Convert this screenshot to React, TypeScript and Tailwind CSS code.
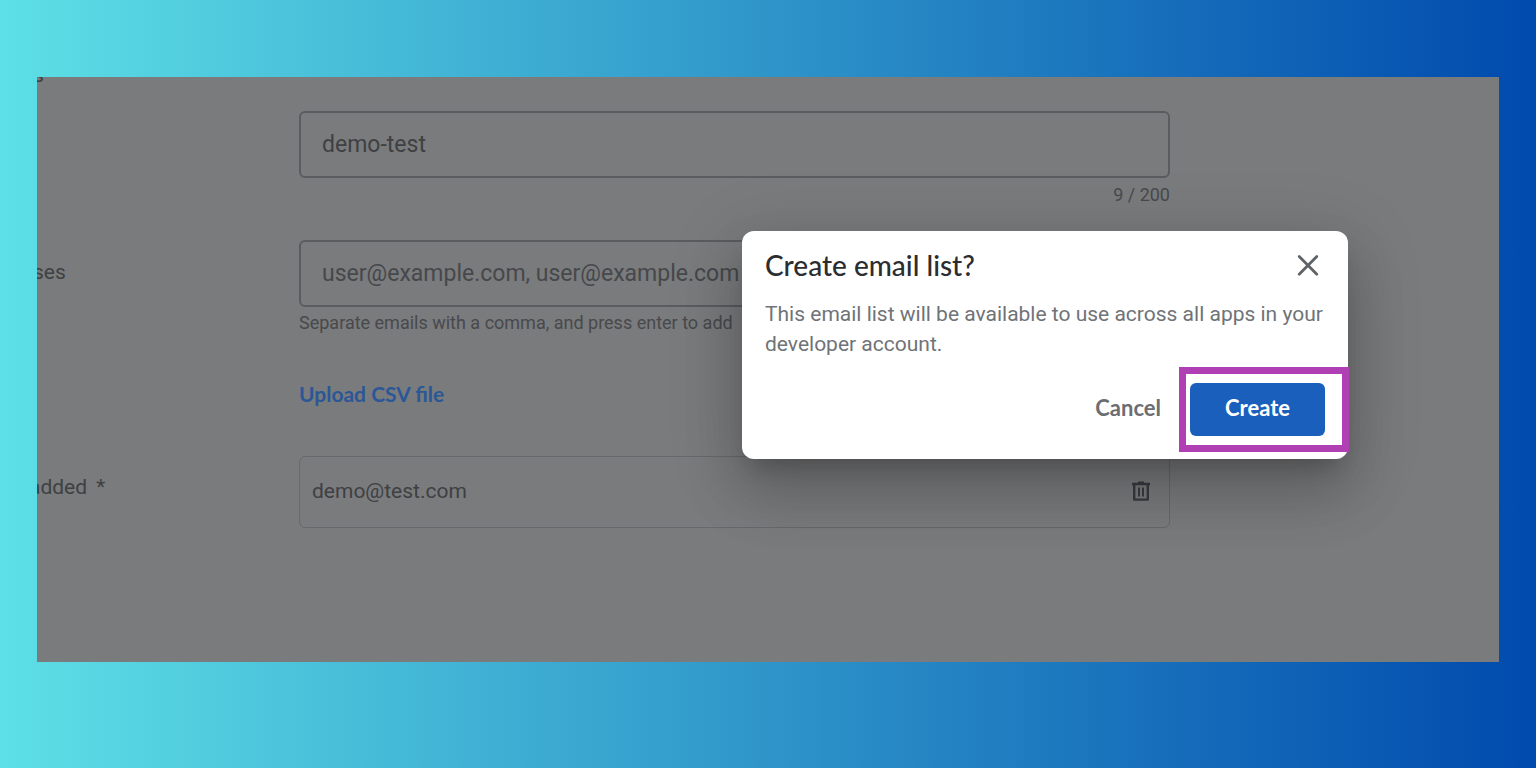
import React, { useState } from 'react';

const CloseIcon: React.FC = () => (
  <svg viewBox="0 0 24 24" className="h-6 w-6" fill="none" stroke="currentColor" strokeWidth="2.8" strokeLinecap="round">
    <path d="M3.2 3.6 20.8 21.2M20.8 3.6 3.2 21.2" />
  </svg>
);

const TrashIcon: React.FC = () => (
  <svg viewBox="0 0 24 24" className="h-6 w-6" fill="none" stroke="currentColor" strokeWidth="2.4">
    <path d="M3 4h18M9 2.6h6" />
    <path d="M5.2 4v15.6h13.6V4" strokeLinejoin="round" />
    <path d="M10 7.5v9M14 7.5v9" strokeWidth="2" />
  </svg>
);

const fieldClass =
  'block h-[67px] w-full rounded-md border-2 border-[#5b5c5f] bg-transparent px-[21px] text-[23px] text-[#3f4043] outline-none placeholder:text-[#46484b]';

const App: React.FC = () => {
  const [name, setName] = useState('demo-test');
  const [emails, setEmails] = useState('');

  return (
    <div className="min-h-screen bg-linear-to-r/srgb from-[#5de0e6] to-[#004aad] px-[37px] py-[77px] font-['Roboto',sans-serif]">
      <main className="relative overflow-hidden bg-[#7a7b7d] pt-[34px] pb-[134px]">
        <div className="grid grid-cols-[262px_1fr] pr-[329px] text-[#3f4043]">
          <label htmlFor="name" className="-ml-1 -mt-12 h-6 text-[21px] leading-6">s</label>
          <div>
            <input id="name" className={fieldClass} value={name} onChange={e => setName(e.target.value)} />
            <p className="mt-[5px] text-right text-lg leading-6 text-[#48494c]">{name.length} / 200</p>
          </div>

          <label htmlFor="emails" className="-ml-1 mt-[53px] text-[21px] leading-6">ses</label>
          <div className="mt-[33px]">
            <input
              id="emails"
              className={fieldClass}
              value={emails}
              placeholder="user@example.com, user@example.com"
              onChange={e => setEmails(e.target.value)}
            />
            <p className="mt-1 text-lg leading-6 text-[#48494c]">Separate emails with a comma, and press enter to add</p>
            <button className="mt-[47px] block font-['Lato',sans-serif] text-[21px] leading-6 font-bold text-[#2b5797]">
              Upload CSV file
            </button>
          </div>

          <div className="-ml-2 mt-[69px] text-[21px] leading-6">
            added <span className="ml-1">*</span>
          </div>
          <div className="mt-[50px] flex h-[72px] items-center justify-between rounded-md border border-[#68696c] pr-4 pl-3 text-[21px]">
            <span>demo@test.com</span>
            <button aria-label="Remove" className="text-[#3a3b40]">
              <TrashIcon />
            </button>
          </div>
        </div>

        <section
          role="dialog"
          aria-labelledby="dialog-title"
          className="absolute top-[154px] right-[151px] w-[606px] rounded-xl bg-white pt-[18px] pb-[7px] pl-[23px] shadow-[0_16px_22px_-10px_rgba(0,0,0,0.2),0_36px_57px_4px_rgba(0,0,0,0.14),0_14px_69px_12px_rgba(0,0,0,0.12)]"
        >
          <div className="flex items-center justify-between pr-7">
            <h2 id="dialog-title" className="font-['Lato',sans-serif] text-[28px] leading-8 font-medium text-[#2c2d30]">
              Create email list?
            </h2>
            <button aria-label="Close" className="text-[#5f6368]">
              <CloseIcon />
            </button>
          </div>
          <p className="mt-[18px] pr-5 text-[21px] leading-[30px] text-[#6f7377]">
            This email list will be available to use across all apps in your developer account.
          </p>
          <div className="-mr-px mt-2 flex items-center justify-end gap-[18px] font-['Lato',sans-serif] text-[22px] font-bold">
            <button className="pb-1 text-[#6a6e72]">Cancel</button>
            <div className="border-[7px] border-[#b03fb3] py-[9px] pr-[17px] pl-1">
              <button className="block h-[53px] w-[135px] rounded-md bg-[#1a5fbc] pb-1 text-white">Create</button>
            </div>
          </div>
        </section>
      </main>
    </div>
  );
};

export default App;
